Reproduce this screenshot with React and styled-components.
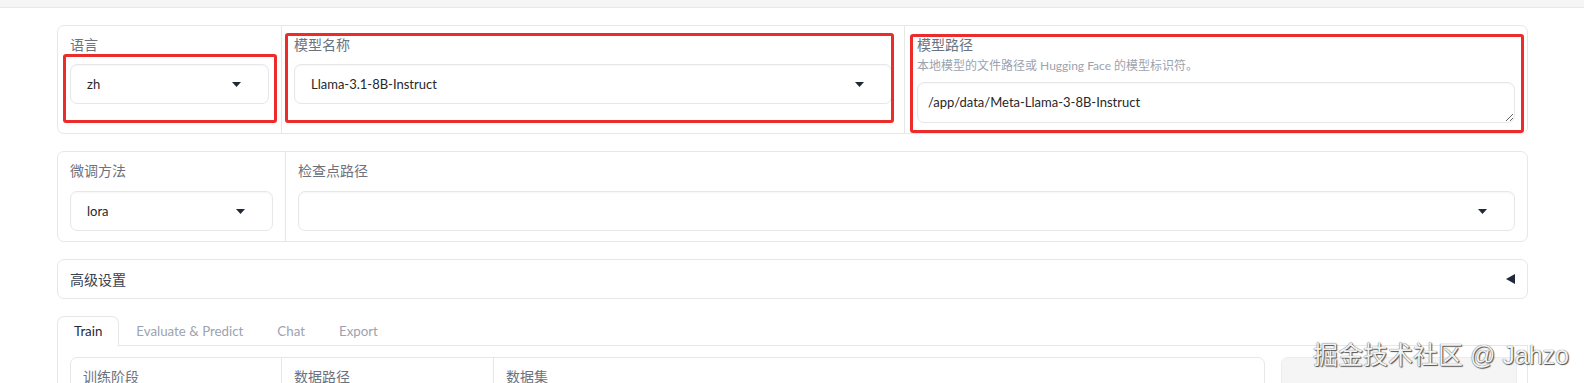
import styled, { createGlobalStyle } from "styled-components";

const GlobalStyle = createGlobalStyle`
  body {
    margin: 0;
    background: #ffffff;
    font-family: "Lato", "Noto Sans CJK SC", sans-serif;
  }
`;

const Page = styled.div`
  position: relative;
  height: 383px;
  overflow: hidden;
`;

const TopStrip = styled.div`
  height: 7px;
  background: #f5f5f5;
  border-bottom: 1px solid #e8e8e8;
`;

const Main = styled.div`
  display: flex;
  flex-direction: column;
  gap: 17px;
  padding: 17px 56px 0 57px;
`;

const Panel = styled.div`
  position: relative;
  display: grid;
  grid-template-columns: ${(p) => p.$cols};
  border: 1px solid #e5e7eb;
  border-radius: 7px;
  background: #ffffff;
`;

const Column = styled.div`
  display: flex;
  flex-direction: column;
  padding: 9px 12px 10px;
  & + & {
    border-left: 1px solid #e5e7eb;
  }
`;

const Label = styled.div`
  font-size: 14px;
  line-height: 20px;
  color: #6b7280;
`;

const Info = styled.div`
  margin-top: 2px;
  font-size: 12px;
  line-height: 18px;
  color: #9ca3af;
`;

const SelectBox = styled.div`
  display: flex;
  align-items: center;
  justify-content: space-between;
  height: 40px;
  box-sizing: border-box;
  margin-top: ${(p) => p.$mt || 9}px;
  padding: 0 27px 0 16px;
  border: 1px solid #e5e7eb;
  border-radius: 7px;
  background: #ffffff;
  box-shadow: inset 0 1px 2px rgba(0, 0, 0, 0.04);
  font-size: 13px;
  color: #27272a;
`;

const TextBox = styled.textarea`
  display: block;
  width: 100%;
  height: 41px;
  box-sizing: border-box;
  margin-top: 7px;
  padding: 9px 10px;
  border: 1px solid #e5e7eb;
  border-radius: 7px;
  background: #ffffff;
  box-shadow: inset 0 1px 2px rgba(0, 0, 0, 0.04);
  font-family: "Lato", "Noto Sans CJK SC", sans-serif;
  font-size: 13px;
  line-height: 20px;
  color: #27272a;
  outline: none;
`;

const Highlight = styled.div`
  position: absolute;
  left: ${(p) => p.$x}px;
  top: ${(p) => p.$y}px;
  width: ${(p) => p.$w}px;
  height: ${(p) => p.$h}px;
  box-sizing: border-box;
  border: 3px solid #ec2b2b;
  border-radius: 3px;
  pointer-events: none;
`;

const Accordion = styled.div`
  display: flex;
  align-items: center;
  justify-content: space-between;
  height: 40px;
  box-sizing: border-box;
  padding: 0 12px;
  border: 1px solid #e5e7eb;
  border-radius: 7px;
  font-size: 14px;
  color: #374151;
`;

const TabNav = styled.div`
  display: flex;
  border-bottom: 1px solid #e5e7eb;
`;

const Tab = styled.div`
  height: 29px;
  box-sizing: border-box;
  margin-bottom: -1px;
  padding: 0 16px;
  border: 1px solid transparent;
  border-bottom: none;
  border-radius: 7px 7px 0 0;
  font-size: 13.3px;
  line-height: 28px;
  color: #9ca3af;
  ${(p) =>
    p.$active &&
    `
    border-color: #e5e7eb;
    background: #ffffff;
    height: 30px;
    color: #1f2937;
  `}
`;

const TabPanel = styled.div`
  display: flex;
  gap: 16px;
  padding: 11px 10px 11px 12px;
  border: 1px solid #e5e7eb;
  border-top: none;
`;

const InnerBox = styled.div`
  flex: 1;
  display: grid;
  grid-template-columns: 210px 212px 1fr;
  border: 1px solid #e5e7eb;
  border-radius: 7px;
`;

const SideButton = styled.div`
  width: 236px;
  height: 90px;
  box-sizing: border-box;
  display: flex;
  align-items: center;
  justify-content: center;
  border: 1px solid #ececec;
  border-radius: 7px;
  background: #f5f5f5;
  font-size: 14px;
  color: #374151;
`;

const Watermark = styled.div`
  position: absolute;
  right: 15px;
  top: 340px;
  font-family: "Liberation Sans", "Noto Sans CJK SC", sans-serif;
  font-size: 25px;
  line-height: 30px;
  color: #f2f2f2;
  text-shadow: 0 0 1px #333333, 1px 1px 1px #555555;
  white-space: nowrap;
`;

const Caret = () => (
  <svg width="9" height="5" viewBox="0 0 9 5">
    <polygon points="0,0 9,0 4.5,5" fill="#1f2937" />
  </svg>
);

const Collapse = () => (
  <svg width="9" height="10" viewBox="0 0 9 10">
    <polygon points="9,0 9,10 0,5" fill="#1f2937" />
  </svg>
);

const Select = ({ value, mt }) => (
  <SelectBox $mt={mt}>
    <span>{value}</span>
    <Caret />
  </SelectBox>
);

export default function App() {
  return (
    <Page>
      <GlobalStyle />
      <TopStrip />
      <Main>
        <Panel $cols="223px 1fr 1fr">
          <Column>
            <Label>语言</Label>
            <Select value="zh" />
          </Column>
          <Column>
            <Label>模型名称</Label>
            <Select value="Llama-3.1-8B-Instruct" />
          </Column>
          <Column>
            <Label>模型路径</Label>
            <Info>本地模型的文件路径或 Hugging Face 的模型标识符。</Info>
            <TextBox rows={1} readOnly value="/app/data/Meta-Llama-3-8B-Instruct" />
          </Column>
          <Highlight $x={5} $y={28} $w={214} $h={69} />
          <Highlight $x={227} $y={7} $w={609} $h={90} />
          <Highlight $x={852} $y={8} $w={614} $h={99} />
        </Panel>

        <Panel $cols="227px 1fr">
          <Column>
            <Label>微调方法</Label>
            <Select value="lora" mt={10} />
          </Column>
          <Column>
            <Label>检查点路径</Label>
            <Select value="" mt={10} />
          </Column>
        </Panel>

        <Accordion>
          <span>高级设置</span>
          <Collapse />
        </Accordion>

        <div>
          <TabNav>
            <Tab $active>Train</Tab>
            <Tab>Evaluate &amp; Predict</Tab>
            <Tab>Chat</Tab>
            <Tab>Export</Tab>
          </TabNav>
          <TabPanel>
            <InnerBox>
              <Column>
                <Label>训练阶段</Label>
                <Select value="Supervised Fine-Tuning" />
              </Column>
              <Column>
                <Label>数据路径</Label>
                <Select value="data" />
              </Column>
              <Column>
                <Label>数据集</Label>
                <Select value="" />
              </Column>
            </InnerBox>
            <SideButton>预览数据集</SideButton>
          </TabPanel>
        </div>
      </Main>
      <Watermark>掘金技术社区 @ Jahzo</Watermark>
    </Page>
  );
}
